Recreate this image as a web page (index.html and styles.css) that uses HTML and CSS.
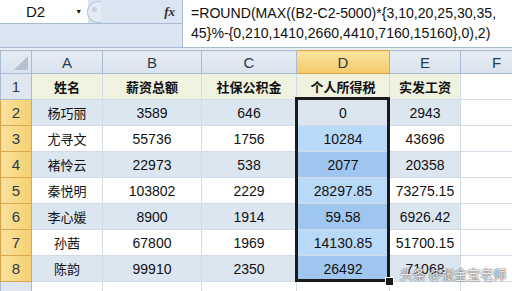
FILE: index.html
```html
<!DOCTYPE html>
<html lang="zh">
<head>
    <meta charset="UTF-8">
    <title>个人所得税</title>
    <link rel="stylesheet" href="styles.css">
</head>
<body>
    <div class="formula-bar">
        <div class="fb-left">
            <div class="fb-top">
                <div class="name-box">
                    <span class="cell-ref">D2</span>
                    <span class="drop">&#9660;</span>
                </div>
                <div class="splitter"><span class="dot"></span></div>
                <div class="fx">fx</div>
            </div>
            <div class="fb-bottom"></div>
        </div>
        <div class="formula-text">=ROUND(MAX((B2-C2-5000)*{3,10,20,25,30,35,<br>45}%-{0,210,1410,2660,4410,7160,15160},0),2)</div>
    </div>
    <div class="gap"></div>

    <div class="sheet">
        <table class="grid">
            <colgroup>
                <col class="c-hdr"><col class="c-a"><col class="c-b"><col class="c-c"><col class="c-d"><col class="c-e"><col class="c-f">
            </colgroup>
            <tr class="col-head">
                <th class="corner"><span class="tri"></span></th>
                <th>A</th><th>B</th><th>C</th><th class="sel-col">D</th><th>E</th><th>F</th>
            </tr>
            <tr class="title-row">
                <th class="row-num">1</th>
                <td>姓名</td><td>薪资总额</td><td>社保公积金</td><td>个人所得税</td><td>实发工资</td><td class="empty"></td>
            </tr>
            <tr class="band">
                <th class="row-num sel-row">2</th>
                <td>杨巧丽</td><td>3589</td><td>646</td><td class="active">0</td><td>2943</td><td class="empty"></td>
            </tr>
            <tr>
                <th class="row-num sel-row">3</th>
                <td>尤寻文</td><td>55736</td><td>1756</td><td class="d">10284</td><td>43696</td><td class="empty"></td>
            </tr>
            <tr class="band">
                <th class="row-num sel-row">4</th>
                <td>褚怜云</td><td>22973</td><td>538</td><td class="d">2077</td><td>20358</td><td class="empty"></td>
            </tr>
            <tr>
                <th class="row-num sel-row">5</th>
                <td>秦悦明</td><td>103802</td><td>2229</td><td class="d">28297.85</td><td>73275.15</td><td class="empty"></td>
            </tr>
            <tr class="band">
                <th class="row-num sel-row">6</th>
                <td>李心媛</td><td>8900</td><td>1914</td><td class="d">59.58</td><td>6926.42</td><td class="empty"></td>
            </tr>
            <tr>
                <th class="row-num sel-row">7</th>
                <td>孙茜</td><td>67800</td><td>1969</td><td class="d">14130.85</td><td>51700.15</td><td class="empty"></td>
            </tr>
            <tr class="band">
                <th class="row-num sel-row">8</th>
                <td>陈韵</td><td>99910</td><td>2350</td><td class="d">26492</td><td>71068</td><td class="empty"></td>
            </tr>
            <tr class="next">
                <th class="row-num"></th>
                <td></td><td></td><td></td><td></td><td></td><td class="empty"></td>
            </tr>
        </table>
        <div class="selection"><span class="handle"></span></div>
        <div class="watermark">头条 @张金宝老师</div>
    </div>
</body>
</html>
```

FILE: styles.css
```css
body {
    margin: 0;
    width: 512px;
    height: 291px;
    overflow: hidden;
    background: #ffffff;
    font-family: "Liberation Sans", Arial, "Noto Sans CJK SC", sans-serif;
    color: #111;
}
.formula-bar {
    display: flex;
    height: 48px;
    border-bottom: 1px solid #a9bcd3;
    box-sizing: border-box;
}
.fb-left {
    width: 182px;
    display: flex;
    flex-direction: column;
    background: #dbe5f1;
}
.fb-top {
    display: flex;
    height: 24px;
    border-bottom: 1px solid #a9bcd3;
    box-sizing: border-box;
}
.fb-bottom {
    flex: 1;
}
.name-box {
    width: 88px;
    background: #fff;
    display: flex;
    align-items: center;
}
.cell-ref {
    margin-left: 26px;
    font-size: 15px;
}
.drop {
    margin-left: 30px;
    font-size: 7px;
}
.splitter {
    width: 14px;
    margin-left: -1px;
    background: #e4ebf4;
    border: 1px solid #b9c7d8;
    border-right: none;
    border-radius: 11px 0 0 11px;
    margin-top: 1px;
    box-sizing: border-box;
    position: relative;
}
.dot {
    position: absolute;
    left: 4px;
    top: 5px;
    width: 5px;
    height: 5px;
    border-radius: 50%;
    background: #c8d2de;
}
.fx {
    flex: 1;
    text-align: right;
    padding-right: 7px;
    font-family: "Liberation Serif", serif;
    font-style: italic;
    font-weight: bold;
    font-size: 13px;
    line-height: 23px;
    color: #333;
}
.formula-text {
    flex: 1;
    background: #fff;
    border-left: 1px solid #a9bcd3;
    padding: 3px 0 0 8px;
    font-size: 14.1px;
    line-height: 20px;
    white-space: nowrap;
}
.gap {
    height: 2px;
    background: #e9eef5;
}
.sheet {
    position: relative;
}
.grid {
    border-collapse: collapse;
    table-layout: fixed;
    width: 532px;
}
.c-hdr { width: 31px; }
.c-a { width: 71px; }
.c-b { width: 99px; }
.c-c { width: 95px; }
.c-d { width: 93px; }
.c-e { width: 71px; }
.c-f { width: 72px; }
.grid th, .grid td {
    border: 1px solid #d3dbe6;
    padding: 0;
    text-align: center;
    font-weight: normal;
    font-size: 14px;
    height: 25px;
    white-space: nowrap;
    overflow: hidden;
}
.col-head th {
    height: 22px;
    background: linear-gradient(#e6ecf4, #d9e2ee);
    border-color: #a9bcd3;
    color: #2b3a4d;
    font-size: 15px;
}
.col-head .sel-col {
    background: linear-gradient(#fae4a0, #f4ca6a);
    border-color: #d9a84a;
}
.corner {
    position: relative;
}
.tri {
    position: absolute;
    right: 3px;
    bottom: 3px;
    width: 0;
    height: 0;
    border-left: 14px solid transparent;
    border-bottom: 14px solid #b4c0ce;
}
.row-num {
    background: #dfe6ef;
    border-color: #a9bcd3 !important;
    color: #2b3a4d;
    font-size: 15px !important;
}
.row-num.sel-row {
    background: linear-gradient(90deg, #fbe29c, #f5cf72);
    border-color: #d9a84a !important;
}
.title-row td {
    background: #eef2de;
    font-family: "Noto Sans CJK SC", sans-serif;
    font-weight: bold;
    font-size: 13px;
}
.band td {
    background: #dce6f1;
}
.grid td.d {
    background: #b9d9f9;
}
.band td.d {
    background: #9fc6ee;
}
.grid td.empty {
    background: #fff;
}
.grid tr td:first-of-type {
    font-family: "Noto Sans CJK SC", sans-serif;
    font-size: 13px;
}
.title-row td:first-of-type {
    font-weight: bold;
}
.selection {
    position: absolute;
    left: 295px;
    top: 47px;
    width: 89px;
    height: 179px;
    border: 3px solid #1a1a1a;
}
.handle {
    position: absolute;
    right: -7px;
    bottom: -7px;
    width: 7px;
    height: 7px;
    background: #1a1a1a;
    border: 1px solid #fff;
}
.watermark {
    position: absolute;
    left: 400px;
    top: 215px;
    font-family: "Noto Sans CJK SC", sans-serif;
    font-size: 13px;
    line-height: 18px;
    color: rgba(255, 255, 255, 0.9);
    text-shadow: 0 0 1px #444, 0 0 2px #666;
    white-space: nowrap;
}
```
